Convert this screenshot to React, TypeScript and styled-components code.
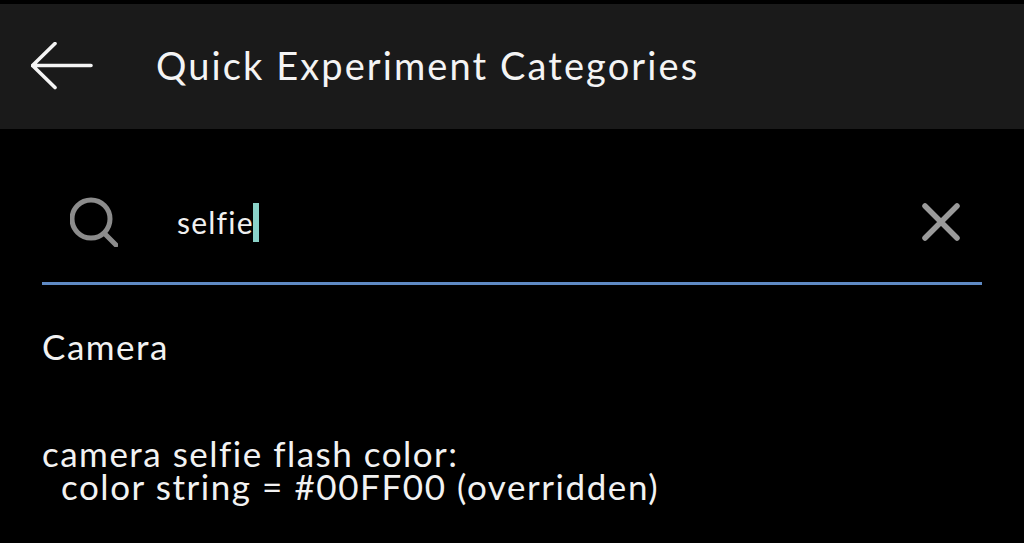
import styled, { createGlobalStyle } from 'styled-components'

const GlobalStyle = createGlobalStyle`
  html, body {
    margin: 0;
    height: 100%;
    background: #000;
    overflow: hidden;
  }
`

const Page = styled.div`
  width: 1024px;
  height: 543px;
  padding-top: 4px;
  box-sizing: border-box;
  background: #000;
  color: #f2f2f2;
  font-family: Lato, 'Noto Sans', sans-serif;
  overflow: hidden;
`

const Header = styled.header`
  display: flex;
  align-items: center;
  height: 125px;
  padding-left: 31px;
  box-sizing: border-box;
  background: #1a1a1a;
`

const BackIcon = styled.svg`
  width: 62px;
  height: 48px;
  flex: none;
  margin-right: 63px;
  margin-top: -1px;
`

const Title = styled.h1`
  margin: -4px 0 0;
  font-size: 38px;
  font-weight: 400;
  letter-spacing: 2.1px;
  color: #f4f4f4;
`

const SearchRow = styled.div`
  display: flex;
  align-items: center;
  height: 156px;
  margin: 0 42px;
  padding: 33px 22px 0 28px;
  box-sizing: border-box;
  border-bottom: 3px solid #5f8ac4;
`

const SearchIcon = styled.svg`
  width: 48px;
  height: 50px;
  flex: none;
  margin-right: 59px;
`

const Query = styled.div`
  flex: 1;
  display: flex;
  align-items: center;
  font-size: 30px;
  letter-spacing: 1.2px;
  color: #f0f0f0;
`

const Caret = styled.span`
  width: 6px;
  height: 39px;
  margin-left: -1px;
  background: #8ad2c8;
`

const ClearIcon = styled.svg`
  width: 38px;
  height: 38px;
  flex: none;
`

const Category = styled.div`
  margin: 41px 42px 0;
  font-size: 35px;
  line-height: 40px;
  letter-spacing: 1.5px;
`

const Entry = styled.div`
  margin: 71px 42px 0;
  font-size: 35px;
  line-height: 33px;
  letter-spacing: 1.5px;
`

const EntryValue = styled.div`
  padding-left: 19px;
  letter-spacing: 1.56px;
`

export default function App() {
  return (
    <Page>
      <GlobalStyle />
      <Header>
        <BackIcon viewBox="0 0 62 48" fill="none" stroke="#f4f4f4" strokeWidth="3.6" strokeLinecap="round" strokeLinejoin="round">
          <path d="M1.5 23.5H60M24 1.5L1.5 23.5L24 45.5" />
        </BackIcon>
        <Title>Quick Experiment Categories</Title>
      </Header>
      <SearchRow>
        <SearchIcon viewBox="0 0 48 50" fill="none" stroke="#8c8c8c" strokeWidth="5" strokeLinecap="round">
          <circle cx="21" cy="22" r="19" />
          <path d="M35 37L46 48" />
        </SearchIcon>
        <Query>
          selfie
          <Caret />
        </Query>
        <ClearIcon viewBox="0 0 38 38" fill="none" stroke="#9a9a9a" strokeWidth="5.5" strokeLinecap="round">
          <path d="M3 3L35 35M35 3L3 35" />
        </ClearIcon>
      </SearchRow>
      <Category>Camera</Category>
      <Entry>
        camera selfie flash color:
        <EntryValue>color string = #00FF00 (overridden)</EntryValue>
      </Entry>
    </Page>
  )
}
